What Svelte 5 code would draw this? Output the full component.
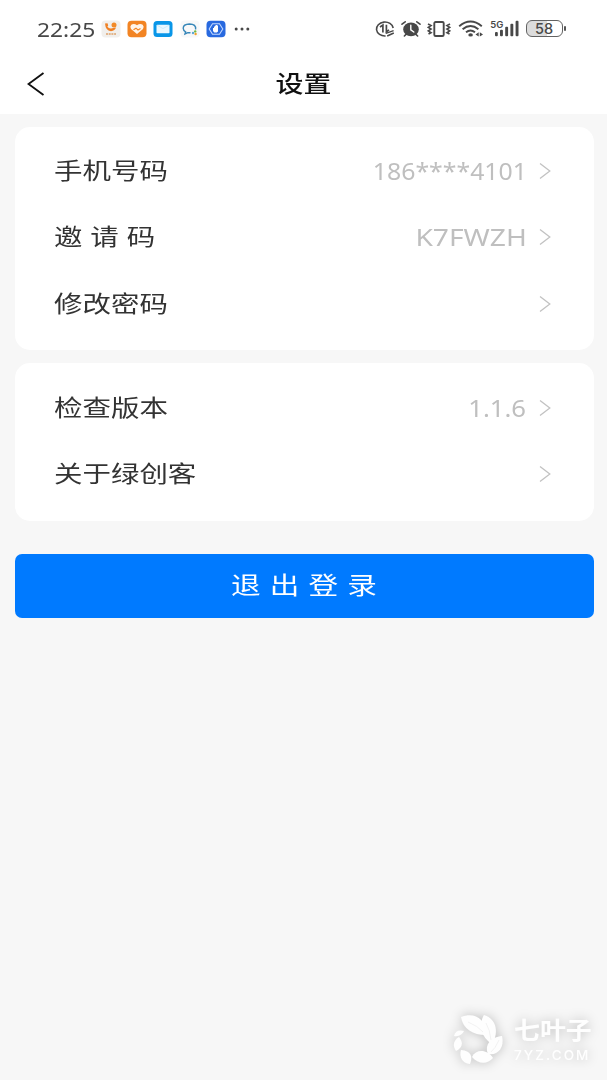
<script>
  const groups = [
    [
      { label: '手机号码', value: '186****4101', stretch: 1.035 },
      { label: '邀 请 码', value: 'K7FWZH', stretch: 1.175 },
      { label: '修改密码', value: '' },
    ],
    [
      { label: '检查版本', value: '1.1.6', stretch: 1.07 },
      { label: '关于绿创客', value: '' },
    ],
  ];
</script>

<div class="page">
  <!-- Status bar -->
  <div class="status">
    <span class="clock">22:25</span>
    <div class="apps">
      <svg width="20" height="18" viewBox="0 0 20 18">
        <rect x="0.5" y="0.5" width="19" height="17" rx="4" fill="#f1efec" />
        <circle cx="13" cy="5" r="2.5" fill="#f28a28" />
        <path d="M4 3.5 L6.5 3.2 L7.2 5.6 L6.4 6.8 Q8.2 9 11 8.2 L15 7.6 Q14 11 10 11.2 Q4.5 10.5 4 3.5Z" fill="#f08124" />
        <path d="M5 14h10" stroke="#dda36c" stroke-width="1.5" stroke-dasharray="2 .7" />
      </svg>
      <svg width="20" height="18" viewBox="0 0 20 18">
        <rect x="0.5" y="0.8" width="19" height="16.4" rx="4" fill="#f28423" />
        <path d="M10 14 L4 9 Q2.5 6.5 4.3 4.8 Q7 3 10 5.3 Q13 3 15.7 4.8 Q17.5 6.5 16 9Z" fill="#fff4e8" />
        <path d="M6.5 9.8 L9 8.2 L11 10 L13.5 8.6" fill="none" stroke="#f28423" stroke-width="1.1" />
      </svg>
      <svg width="20" height="18" viewBox="0 0 20 18">
        <rect x="0.5" y="1" width="19" height="16" rx="3.5" fill="#0996e8" />
        <rect x="3.5" y="4.8" width="13" height="8.5" rx="0.8" fill="#eaf8ff" />
        <path d="M4 5.2 L10 8.6 L16 5.2" fill="none" stroke="#c4e8fb" stroke-width="0.8" />
      </svg>
      <svg width="20" height="18" viewBox="0 0 20 18">
        <rect x="0.5" y="0.5" width="19" height="17" rx="4" fill="#f7f8f9" />
        <path d="M15.6 9.5 Q16.4 4 9.4 4 Q3.3 4.2 3.2 8.2 Q3.3 10.7 5.6 11.8 L5 14 L7.8 12.6 L10.5 12.8" fill="none" stroke="#3686b8" stroke-width="1.4" />
        <circle cx="13" cy="13" r="1.2" fill="#5aa7d8" />
        <circle cx="15.2" cy="11.4" r="1.2" fill="#6cb946" />
        <circle cx="15.6" cy="14" r="1.2" fill="#f3a12c" />
      </svg>
      <svg width="20" height="18" viewBox="0 0 20 18">
        <rect x="0.5" y="0.8" width="19" height="16.4" rx="4" fill="#2869df" />
        <path d="M6.5 3.8h7l3.3 5.2-3.3 5.2h-7L3.2 9z" fill="none" stroke="#c1d7ff" stroke-width="1.1" />
        <path d="M7 8h1V6.6h1V5.4h1V5h1v.6h1v6l-1.2 1H8.3L7 11z" fill="#fff" />
      </svg>
      <svg width="18" height="18" viewBox="0 0 18 18" fill="#484848">
        <circle cx="4.2" cy="9" r="1.5" /><circle cx="10" cy="9" r="1.5" /><circle cx="15.8" cy="9" r="1.5" />
      </svg>
    </div>

    <div class="signals">
      <!-- data saver -->
      <svg width="20" height="20" viewBox="0 0 20 20" fill="none" stroke="#484848">
        <path d="M18.2 9 A8.4 7 0 1 0 10.6 17" stroke-width="1.6" />
        <path d="M5 8 L7.9 6 V13.6 M11.4 5.8 V12.8 L14 10.8" stroke-width="1.7" />
        <path d="M10.8 14.4 L18.6 11.6 M12.2 17 L18.8 14" stroke-width="1.5" />
      </svg>
      <!-- alarm -->
      <svg width="20" height="20" viewBox="0 0 20 20" fill="none" stroke="#484848" stroke-linecap="round">
        <ellipse cx="10" cy="10.4" rx="7.8" ry="6.8" fill="#484848" stroke="none" />
        <path d="M1 5.2 L4.2 2.8 M19 5.2 L15.8 2.8 M5 15.4 L3.4 17 M15 15.4 L16.6 17" stroke-width="1.6" />
        <path d="M9.8 6.3 V10.8 L12.8 13" stroke="#fff" stroke-width="1.4" />
      </svg>
      <!-- vibrate -->
      <svg width="24" height="20" viewBox="0 0 24 20" fill="none" stroke="#484848">
        <rect x="7.3" y="3" width="9.4" height="14" rx="1.3" stroke-width="1.9" />
        <path d="M1 5 L4 6.6 L1.3 8.4 L4 10.1 L1.3 11.9 L4 13.6 L1.5 15" stroke-width="1.7" />
        <path d="M23 5 L20 6.6 L22.7 8.4 L20 10.1 L22.7 11.9 L20 13.6 L22.5 15" stroke-width="1.7" />
      </svg>
      <!-- wifi -->
      <svg width="26" height="20" viewBox="0 0 26 20" fill="none" stroke="#484848">
        <path d="M1.2 7.2 Q12.5 -2 23.8 7.2 M4.6 10.3 Q12.5 3.8 20.4 10.3 M8 13.2 Q12.5 9.6 17 13.2" stroke-width="1.9" />
        <ellipse cx="12.6" cy="15.9" rx="2.3" ry="1.7" fill="#484848" stroke="none" />
        <path d="M17.5 15.4 L20.7 13.2 V17.6Z M25 15.4 L21.8 13.2 V17.6Z" fill="#484848" stroke="none" />
      </svg>
      <div class="cell">
        <span class="gen">5G</span>
        <svg width="24" height="17" viewBox="0 0 24 17" fill="#484848">
          <rect x="0" y="12" width="2.8" height="4.2" rx="1" />
          <rect x="5" y="9.7" width="2.9" height="6.5" rx="1" />
          <rect x="10.2" y="6.8" width="2.9" height="9.4" rx="1" />
          <rect x="15.4" y="3.8" width="2.9" height="12.4" rx="1" />
          <rect x="20.6" y="0.8" width="2.9" height="15.4" rx="1" />
        </svg>
      </div>
      <div class="battery"><span>58</span></div>
      <i class="tip"></i>
    </div>
  </div>

  <!-- Title bar -->
  <header>
    <svg class="back" width="20" height="28" viewBox="0 0 20 28">
      <path d="M16.5 3 L1.5 14 L16.5 25" fill="none" stroke="#111" stroke-width="1.9" />
    </svg>
    <h1>设置</h1>
  </header>

  <main>
    {#each groups as rows}
      <section class="card">
        {#each rows as row}
          <div class="row">
            <span class="label">{row.label}</span>
            {#if row.value}
              <span class="value" style="--stretch:{row.stretch}">{row.value}</span>
            {/if}
            <svg class="arrow" width="12" height="18" viewBox="0 0 12 18">
              <path d="M1 1.5 L10.8 9 L1 16.5" fill="none" stroke="#c2c2c2" stroke-width="1.3" />
            </svg>
          </div>
        {/each}
      </section>
    {/each}
    <button>
      <span>退 出 登 录</span>
    </button>
  </main>

  <div class="mark">
    <svg width="56" height="56" viewBox="0 0 56 56" fill="#fefefe">
      <path d="M8 6 C20 1 33 6 33 24 C20 24 10 18 8 6Z" />
      <path d="M31 4 C42 7 47 20 39 33 C28 26 25 14 31 4Z" />
      <path d="M49 25 C52 37 44 45 35 43 C31 34 38 26 49 25Z" />
      <path d="M19 46 C23 38 34 38 40 47 C34 54 25 53 19 46Z" />
      <path d="M8 39 C18 40 20 45 17 53 C9 52 6 46 8 39Z" />
      <path d="M6 26 C11 32 9 37 3 40 C-1 34 1 29 6 26Z" />
      <path d="M1 25 Q3 18 11 20 Q8 26 1 25Z" />
      <path d="M15 11 Q25 15 30 21 M33 12 Q37 19 38 29 M46 29 Q42 38 38 41" fill="none" stroke="#ececec" stroke-width="0.7" />
    </svg>
    <div class="mark-text">
      <b>七叶子</b>
      <span>7YZ.COM</span>
    </div>
  </div>
</div>

<style>
  :global(body) { background: #f7f7f7; }

  .page {
    position: relative;
    width: 607px; height: 1080px; overflow: hidden;
    display: flex; flex-direction: column;
    background: #f7f7f7;
    font-family: "Noto Sans", "Noto Sans CJK SC", sans-serif;
  }

  /* Status bar */
  .status {
    height: 56px; flex-shrink: 0; box-sizing: border-box;
    display: flex; align-items: center;
    padding: 1px 41px 0 37px;
    background: #fff; color: #484848;
  }

  .clock {
    width: 63.5px; font-size: 20.5px; line-height: 24px;
    transform: scaleX(1.11); transform-origin: left;
    white-space: nowrap;
  }

  .apps { display: flex; gap: 6.4px; }
  .apps svg, .signals svg { display: block; flex-shrink: 0; }

  .signals { margin-left: auto; display: flex; align-items: center; gap: 6.4px; }

  .cell { display: flex; width: 29px; }
  .gen {
    width: 5px; font-family: Inter, sans-serif;
    font-size: 9.5px; font-weight: 600; line-height: 9px;
  }

  .battery {
    box-sizing: border-box; width: 37px; height: 17px;
    border: 1.6px solid #626262; border-radius: 6px;
    background: linear-gradient(to right, #dcdcdc 58%, #fff 58%);
    display: flex; align-items: center; justify-content: center;
    font-family: Inter, sans-serif; font-size: 14.5px; font-weight: 500;
  }
  .tip { width: 2px; height: 5px; background: #555; border-radius: 1px; margin-left: -5px; }

  /* Title bar */
  header {
    height: 57.5px; flex-shrink: 0;
    display: flex; align-items: center; justify-content: center;
    position: relative; background: #fff;
  }
  .back { position: absolute; left: 27px; top: 14px; }

  h1 {
    margin: 0; padding-bottom: 6px;
    font-family: "Noto Sans CJK SC", sans-serif;
    font-size: 22.5px; font-weight: 500; line-height: 34px; color: #111;
    transform: scaleX(1.24);
  }

  main { display: flex; flex-direction: column; gap: 13px; padding: 13px 13.5px 0 15px; }

  .card { background: #fff; border-radius: 15px; padding: 11px 42.5px 13.2px 39px; }

  .row { height: 66.6px; display: flex; align-items: center; }

  .label {
    flex: 1; font-family: "Noto Sans CJK SC", sans-serif;
    font-size: 22.6px; line-height: 34px; color: #333;
    white-space: pre; word-spacing: 1.2px; padding-bottom: 2px;
    transform: scaleX(1.26); transform-origin: left;
  }

  .value {
    font-size: 24px; line-height: 34px; color: #bfbfbf; margin-right: 12.5px;
    transform: scaleX(var(--stretch)); transform-origin: right;
  }

  .arrow { flex-shrink: 0; }

  button {
    height: 64px; margin-top: 20px; padding: 0 0 4px;
    border: 0; border-radius: 7px;
    background: #007aff; color: #fff;
    font-family: "Noto Sans CJK SC", sans-serif; font-size: 23.5px;
  }
  button span { display: inline-block; transform: scaleX(1.26); white-space: pre; word-spacing: 2px; }

  /* Corner mark */
  .mark {
    position: absolute; left: 453px; top: 1011px;
    display: flex; gap: 5px;
    color: #fefefe;
    filter: drop-shadow(0 0 6px rgba(0, 0, 0, .24));
  }
  .mark-text { display: flex; flex-direction: column; align-items: flex-start; padding-top: 2px; }
  .mark-text b {
    font-size: 24px; font-weight: 700; line-height: 34px;
    transform: scaleX(1.08); transform-origin: left;
  }
  .mark-text span {
    font-family: Inter, sans-serif;
    font-size: 13.5px; font-weight: 500; line-height: 17px; letter-spacing: 2.1px;
  }
</style>
